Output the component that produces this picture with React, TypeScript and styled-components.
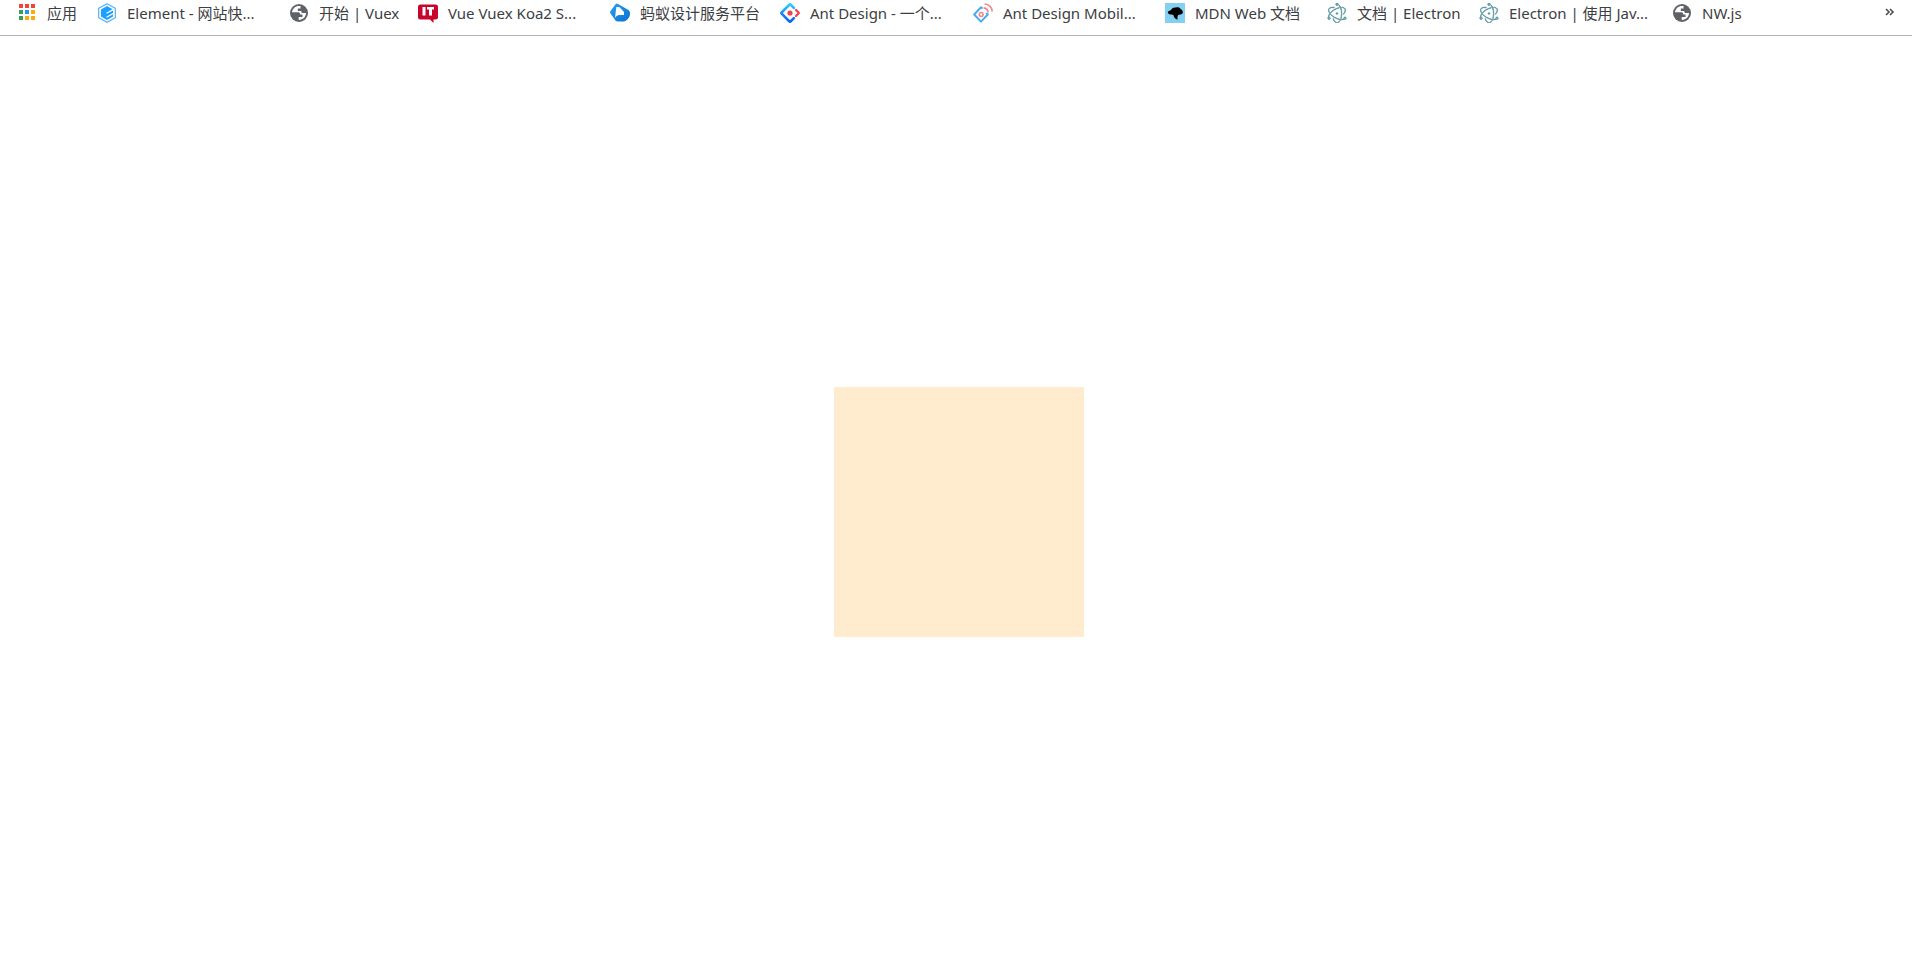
import React from "react";
import { SiElectron } from "react-icons/si";
import styled, { createGlobalStyle } from "styled-components";

const GlobalStyle = createGlobalStyle`
  * { box-sizing: border-box; }
  body { margin: 0; background: #fff; }
`;

const Page = styled.div`
  display: flex;
  flex-direction: column;
  min-height: 100vh;
`;

const BookmarkBar = styled.nav`
  display: flex;
  align-items: center;
  gap: 20px;
  padding: 0 16px 9px 17px;
  border-bottom: 1px solid #b2b2b2;
  overflow: hidden;
  color: #3c4043;
  font-family: "Noto Sans", "Noto Sans CJK SC", sans-serif;
  font-size: 15px;
  line-height: 26px;
`;

const Bookmark = styled.a`
  display: flex;
  flex: none;
  align-items: center;
  gap: 10px;
  color: inherit;
  text-decoration: none;
`;

const Icon = styled.svg`
  display: block;
  flex: none;
  width: 20px;
  height: 20px;
`;

const Label = styled.span<{ $width: number }>`
  width: ${(p) => p.$width}px;
  height: 26px;
  white-space: nowrap;
`;

const MoreButton = styled.button`
  flex: none;
  width: 12px;
  height: 24px;
  margin: 0 0 0 auto;
  padding: 0;
  border: 0;
  background: none;
  color: #4a4d51;
  cursor: pointer;
`;

const MoreIcon = styled.svg`
  display: block;
  width: 12px;
  height: 24px;
`;

const Content = styled.main`
  display: flex;
  flex: 1;
  align-items: center;
  justify-content: center;
  padding: 12px 0 0 6px;
`;

const Box = styled.div`
  width: 250px;
  height: 250px;
  background: #ffebcd;
`;

const AppsIcon = () => (
  <Icon viewBox="0 0 20 20" aria-hidden="true">
    {[
      ["#f44336", "#f44336", "#f44336"],
      ["#34a05a", "#2196f3", "#fbab0a"],
      ["#34a05a", "#fbab0a", "#fbab0a"],
    ].map((row, y) =>
      row.map((fill, x) => (
        <rect key={`${x}${y}`} x={2 + x * 6} y={1 + y * 6} width="4" height="4" fill={fill} />
      )),
    )}
  </Icon>
);

const ElementIcon = () => (
  <Icon viewBox="0 0 20 20" aria-hidden="true">
    <path d="M10 .7 18.300 5.300v9.400L10 19.300 1.700 14.700V5.300z" fill="#fff" stroke="#4db0ff" strokeWidth="1.200" />
    <path d="M10 3 16 6.400v7.200L10 17 4 13.600V6.400z" fill="#1e9fff" />
    <path d="m9.500 10.300 6.700-3.700M9.500 14.200l6.700-3.700" stroke="#fff" strokeWidth="1.300" />
  </Icon>
);

const GlobeIcon = () => (
  <Icon viewBox="0 0 20 20" aria-hidden="true">
    <circle cx="10" cy="10" r="9" fill="#5f6368" />
    <path d="M11.500 3.100C7.500 2.200 3.400 4.900 3 9.300h6.300c1.600 0 1.900 1 1.900 2.300h2.300V14H9.700v2.900c3.800.2 7.200-2.600 7.300-6.800h-3.200c-1.300 0-1.500-1-1.500-2.200H8.800V5.400h2.700z" fill="#fff" />
  </Icon>
);

const ItIcon = () => (
  <Icon viewBox="0 0 20 20" aria-hidden="true">
    <path d="M2.500 1.500h15A2.500 2.500 0 0 1 20 4v10a2.500 2.500 0 0 1-2.500 2.500H15.500V20L12 16.500H2.500A2.500 2.500 0 0 1 0 14V4a2.500 2.500 0 0 1 2.500-2.500z" fill="#c7042c" />
    <path d="M4.500 4h3v8.500h-3zM9 4h7v2.500h-2v6h-3v-6H9z" fill="#fff" />
  </Icon>
);

const AntServiceIcon = () => (
  <Icon viewBox="0 0 20 20" aria-hidden="true">
    <defs>
      <linearGradient id="antService" x1="0" y1="0" x2="1" y2="1">
        <stop stopColor="#2ba0f3" />
        <stop offset="1" stopColor="#0a6fd0" />
      </linearGradient>
    </defs>
    <path d="M5.500 1.200c.8-.6 2-.6 3 0l9.500 5.500c1.500.9 2 2 2 3.500 0 4.500-3 8.300-8 8.300H8c-2 0-2.800-1-3.500-2.500L.5 10.500c-.6-.8-.6-1.500 0-2.500z" fill="url(#antService)" />
    <path d="M6.300 4h3l4.700 5v2.900H9.500c-2 0-3.500 1.100-4.500 3.100z" fill="#fff" />
  </Icon>
);

const AntDesignIcon = () => (
  <Icon viewBox="0 0 20 20" fill="none" aria-hidden="true">
    <defs>
      <linearGradient id="antBlue" x1="0" y1="0" x2="0" y2="1">
        <stop stopColor="#29cdff" />
        <stop offset=".5" stopColor="#148eff" />
        <stop offset="1" stopColor="#0a60ff" />
      </linearGradient>
    </defs>
    <path d="m13.800 4.800-3.100-3.100a1 1 0 0 0-1.400 0L1.700 9.300a1 1 0 0 0 0 1.400l7.600 7.600a1 1 0 0 0 1.400 0l3.100-3.100" stroke="url(#antBlue)" strokeWidth="2.600" strokeLinecap="round" />
    <path d="m16 7 2.500 2.500a.7.700 0 0 1 0 1L16 13" stroke="#f5444f" strokeWidth="2.400" strokeLinecap="round" />
    <circle cx="10" cy="10" r="2.600" fill="#f5414d" />
  </Icon>
);

const AntMobileIcon = () => (
  <Icon viewBox="0 0 20 20" fill="none" aria-hidden="true">
    <path d="M9.500 5.500 8 4.300 1.200 11.500 8 18.600l6.800-7.100-1.500-1.600" stroke="#4aabf0" strokeWidth="2" strokeLinejoin="round" />
    <circle cx="8.200" cy="11.500" r="1.900" stroke="#f2858a" strokeWidth="1.500" />
    <path d="M10.600 4.800c2.600.3 4.300 2 4.500 4.600M11.500 1c4.300.3 7.300 3.200 7.700 7.500" stroke="#f2858a" strokeWidth="1.700" />
  </Icon>
);

const MdnIcon = () => (
  <Icon viewBox="0 0 20 20" aria-hidden="true">
    <path d="M0 0h20v20H0z" fill="#83d0f2" />
    <path d="M2.800 9c.9-1 2.200-1.200 3.400-2.200C7.300 5 9 4.200 11 4.600c2-.6 3.800 0 4.600 1.400 1.500.8 2.400 2 2.200 3.800-.4 1.300-1.500 1.700-2.800 1.600-1.300.2-2.200.8-2.400 1.600l-.2 3.700c-2-.7-3.600-2.300-4-4.700-1-.6-2.200-.4-3.400-.6C3.500 11 2.800 10 2.800 9z" fill="#000" />
  </Icon>
);

const ElectronIcon = () => (
  <Icon
    as={SiElectron}
    fill="#5b98a3"
    stroke="#5b98a3"
    strokeWidth=".9"
    aria-hidden="true"
  />
);

interface BookmarkEntry {
  icon: React.FC;
  text: string;
  width: number;
}

const bookmarks: BookmarkEntry[] = [
  { icon: AppsIcon, text: "应用", width: 30 },
  { icon: ElementIcon, text: "Element - 网站快...", width: 142 },
  { icon: GlobeIcon, text: "开始 | Vuex", width: 79 },
  { icon: ItIcon, text: "Vue Vuex Koa2 S...", width: 142 },
  { icon: AntServiceIcon, text: "蚂蚁设计服务平台", width: 120 },
  { icon: AntDesignIcon, text: "Ant Design - 一个...", width: 143 },
  { icon: AntMobileIcon, text: "Ant Design Mobil...", width: 142 },
  { icon: MdnIcon, text: "MDN Web 文档", width: 112 },
  { icon: ElectronIcon, text: "文档 | Electron", width: 102 },
  { icon: ElectronIcon, text: "Electron | 使用 Jav...", width: 143 },
  { icon: GlobeIcon, text: "NW.js", width: 42 },
];

export default function App() {
  return (
    <Page>
      <GlobalStyle />
      <BookmarkBar>
        {bookmarks.map(({ icon: Glyph, text, width }) => (
          <Bookmark key={text} href="#">
            <Glyph />
            <Label $width={width}>{text}</Label>
          </Bookmark>
        ))}
        <MoreButton type="button" aria-label="更多书签">
          <MoreIcon viewBox="0 0 12 24" fill="none" stroke="currentColor" strokeWidth="1.600" aria-hidden="true">
            <path d="m2 8 3 3-3 3M6 8l3 3-3 3" />
          </MoreIcon>
        </MoreButton>
      </BookmarkBar>
      <Content>
        <Box />
      </Content>
    </Page>
  );
}
